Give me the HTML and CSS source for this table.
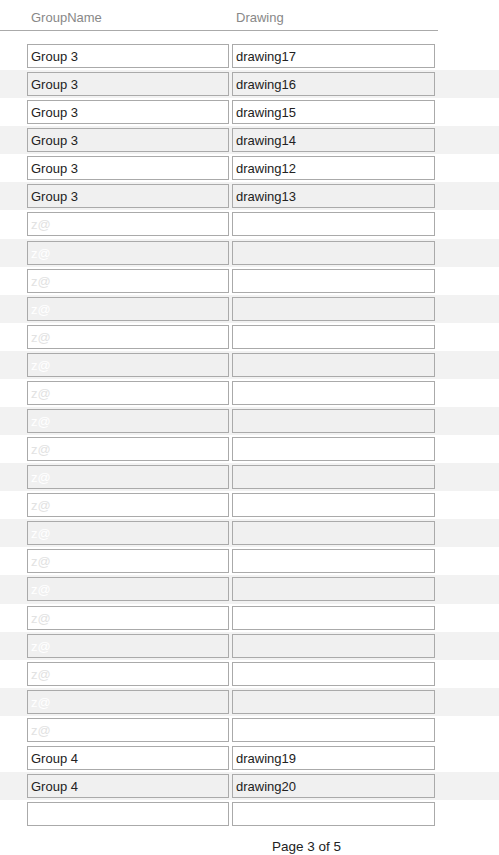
FILE: index.html
```html
<!DOCTYPE html>
<html>
<head>
<meta charset="utf-8">
<link rel="stylesheet" href="styles.css">
</head>
<body>
<div class="head">
  <div class="hcell c1">GroupName</div>
  <div class="hcell c2">Drawing</div>
</div>
<div class="rows">
  <div class="group">
    <div class="row"><div class="cell c1">Group 3</div><div class="cell c2">drawing17</div></div>
    <div class="row"><div class="cell c1">Group 3</div><div class="cell c2">drawing16</div></div>
    <div class="row"><div class="cell c1">Group 3</div><div class="cell c2">drawing15</div></div>
    <div class="row"><div class="cell c1">Group 3</div><div class="cell c2">drawing14</div></div>
    <div class="row"><div class="cell c1">Group 3</div><div class="cell c2">drawing12</div></div>
    <div class="row"><div class="cell c1">Group 3</div><div class="cell c2">drawing13</div></div>
    <div class="row"><div class="cell c1 ph">z@</div><div class="cell c2"></div></div>
    <div class="row"><div class="cell c1 ph">z@</div><div class="cell c2"></div></div>
    <div class="row"><div class="cell c1 ph">z@</div><div class="cell c2"></div></div>
    <div class="row"><div class="cell c1 ph">z@</div><div class="cell c2"></div></div>
    <div class="row"><div class="cell c1 ph">z@</div><div class="cell c2"></div></div>
    <div class="row"><div class="cell c1 ph">z@</div><div class="cell c2"></div></div>
    <div class="row"><div class="cell c1 ph">z@</div><div class="cell c2"></div></div>
    <div class="row"><div class="cell c1 ph">z@</div><div class="cell c2"></div></div>
    <div class="row"><div class="cell c1 ph">z@</div><div class="cell c2"></div></div>
    <div class="row"><div class="cell c1 ph">z@</div><div class="cell c2"></div></div>
    <div class="row"><div class="cell c1 ph">z@</div><div class="cell c2"></div></div>
    <div class="row"><div class="cell c1 ph">z@</div><div class="cell c2"></div></div>
    <div class="row"><div class="cell c1 ph">z@</div><div class="cell c2"></div></div>
    <div class="row"><div class="cell c1 ph">z@</div><div class="cell c2"></div></div>
    <div class="row"><div class="cell c1 ph">z@</div><div class="cell c2"></div></div>
    <div class="row"><div class="cell c1 ph">z@</div><div class="cell c2"></div></div>
    <div class="row"><div class="cell c1 ph">z@</div><div class="cell c2"></div></div>
    <div class="row"><div class="cell c1 ph">z@</div><div class="cell c2"></div></div>
    <div class="row"><div class="cell c1 ph">z@</div><div class="cell c2"></div></div>
  </div>
  <div class="group">
    <div class="row"><div class="cell c1">Group 4</div><div class="cell c2">drawing19</div></div>
    <div class="row"><div class="cell c1">Group 4</div><div class="cell c2">drawing20</div></div>
    <div class="row"><div class="cell c1"></div><div class="cell c2"></div></div>
  </div>
</div>
<div class="pager">Page 3 of 5</div>
</body>
</html>
```
FILE: styles.css
```css
html, body {
  margin: 0;
  padding: 0;
  background: #fff;
}
body {
  font-family: "Liberation Sans", Arial, sans-serif;
  font-size: 13px;
  color: #222;
}
.head {
  display: flex;
  gap: 3px;
  width: 438px;
  height: 31px;
  padding-left: 27px;
  box-sizing: border-box;
  border-bottom: 1px solid #aaa;
}
.hcell {
  padding-left: 4px;
  line-height: 36px;
  color: #888;
  box-sizing: border-box;
}
.hcell.c1 { width: 202px; }
.rows {
  margin-top: 11px;
}
.row {
  display: flex;
  gap: 3px;
  height: 28.08px;
  padding: 2px 0 2px 27px;
  box-sizing: border-box;
}
.row:nth-child(even) {
  background: #f2f2f2;
}
.cell {
  height: 24px;
  border: 1px solid #aaa;
  box-sizing: border-box;
  padding-left: 3px;
  line-height: 24px;
  background: #fff;
}
.row:nth-child(even) .cell {
  background: #f0f0f0;
}
.cell.c1 { width: 202px; }
.cell.c2 { width: 203px; }
.cell.ph { color: #e2e2e2; }
.row:nth-child(even) .cell.ph { color: #fff; }
.pager {
  padding-left: 272px;
  padding-top: 10px;
  line-height: 18px;
  font-size: 13.5px;
  color: #222;
}
```
